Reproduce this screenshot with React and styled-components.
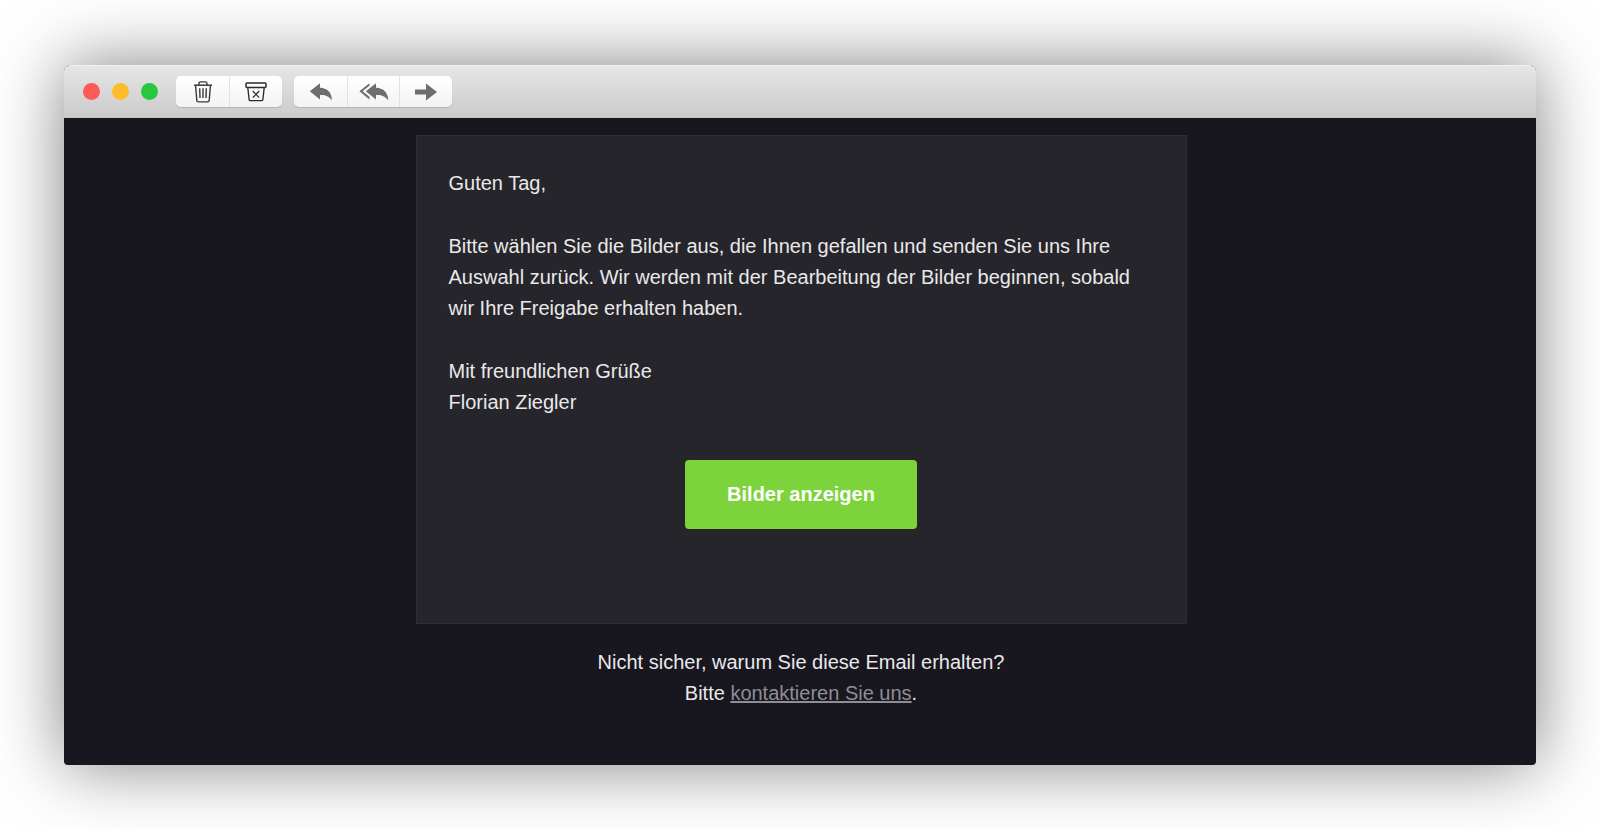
import React from "react";
import styled, { createGlobalStyle } from "styled-components";

const GlobalStyle = createGlobalStyle`
  * {
    box-sizing: border-box;
  }

  body {
    margin: 0;
    background-color: #ffffff;
    font-family: "Liberation Sans", Arial, sans-serif;
  }
`;

const Page = styled.div`
  padding: 65px 64px;
  overflow: hidden;
`;

const Window = styled.div`
  border-radius: 6px 6px 4px 4px;
  background-color: #18161f;
  box-shadow: 0 0 70px rgba(0, 0, 0, 0.5);
`;

const Toolbar = styled.header`
  display: flex;
  align-items: center;
  height: 53px;
  padding: 0 19px;
  border-top: 1px solid #f0f0f0;
  border-bottom: 1px solid #c4c4c4;
  border-radius: 6px 6px 0 0;
  background: linear-gradient(#e6e6e6, #cbcbcb);
`;

const WindowControls = styled.div`
  display: flex;
  gap: 12px;
  margin-right: 18px;
`;

const Dot = styled.button`
  width: 17px;
  height: 17px;
  padding: 0;
  border: none;
  border-radius: 50%;
  background-color: ${(props) => props.$color};
`;

const ButtonGroup = styled.div`
  display: flex;
  margin-right: 12px;
  padding: 0 1px;
  border-radius: 5px;
  background: linear-gradient(#ffffff, #f3f3f3);
  box-shadow: 0 1px 1px rgba(0, 0, 0, 0.14);
`;

const ToolButton = styled.button`
  display: flex;
  justify-content: center;
  align-items: center;
  width: 52px;
  height: 31px;
  padding: 0;
  border: none;
  background: none;

  & + & {
    border-left: 1px solid #e2e2e2;
  }
`;

const Mail = styled.main`
  display: flex;
  flex-direction: column;
  align-items: center;
  padding: 17px 16px 56px 18px;
  color: #e9e9ea;
  font-size: 20px;
  line-height: 31px;
`;

const Card = styled.section`
  width: 100%;
  max-width: 771px;
  padding: 32px 32px 94px;
  border: 1px solid #303034;
  background-color: #26252b;
`;

const Paragraph = styled.p`
  margin: 0 0 32px;
`;

const Action = styled.div`
  display: flex;
  justify-content: center;
  padding-top: 10px;
`;

const ShowButton = styled.button`
  width: 232px;
  height: 69px;
  border: none;
  border-radius: 4px;
  background-color: #7dd33b;
  color: #ffffff;
  font-family: inherit;
  font-size: 20px;
  font-weight: 700;
`;

const Footer = styled.footer`
  padding-top: 23px;
  text-align: center;
`;

const ContactLink = styled.a`
  color: #8f8e94;
  text-decoration: underline;
`;

const TrashIcon = () => (
  <svg width="20" height="22" viewBox="0 0 20 22" fill="none" stroke="#3a3a3a">
    <path d="M1 4.2h18" strokeWidth="1.5" />
    <path d="M6 4V2.4Q6 .9 7.6 .9h4.8Q14 .9 14 2.4V4" strokeWidth="1.4" />
    <path
      d="M2.6 4.8l1.2 14.6q.1 1.5 1.6 1.5h9.2q1.5 0 1.6-1.5l1.2-14.6"
      strokeWidth="1.4"
    />
    <path d="M6.7 7.2l.3 9.8M10 7.2V17M13.3 7.2L13 17" strokeWidth="1.4" />
  </svg>
);

const ArchiveIcon = () => (
  <svg width="22" height="20" viewBox="0 0 22 20" fill="none" stroke="#2a2a2a">
    <rect x="1" y="1" width="20" height="4.4" rx="1" strokeWidth="1.5" />
    <path
      d="M2.8 5.6l1.3 12q.1 1 1.2 1h11.4q1.1 0 1.2-1l1.3-12"
      strokeWidth="1.3"
    />
    <path d="M7.8 9l6.4 6.6M14.2 9l-6.4 6.6" strokeWidth="1.2" />
  </svg>
);

const ReplyIcon = () => (
  <svg width="24" height="18" viewBox="0 0 24 18" fill="#6e6e6e">
    <path d="M.8 8.3L11 .2v4.6c6.8.2 11.8 4.2 12 12.8-2.4-4-6-5.8-12-5.6v4.4z" />
  </svg>
);

const ReplyAllIcon = () => (
  <svg width="30" height="18" viewBox="0 0 30 18" fill="#6e6e6e">
    <path d="M10.4 .2v2.6L3.6 8.3l6.8 5.4v2.7L.4 8.3z" />
    <path d="M6.8 8.3L17 .2v4.6c7 .2 12 4.2 12.3 12.8-2.4-4-6.3-5.8-12.3-5.6v4.4z" />
  </svg>
);

const ForwardIcon = () => (
  <svg width="22" height="18" viewBox="0 0 22 18" fill="#6e6e6e">
    <path d="M0 6.5h11V.4L22 9l-11 8.6v-6.1H0z" />
  </svg>
);

const App = () => {
  return (
    <>
      <GlobalStyle />
      <Page>
        <Window>
          <Toolbar>
            <WindowControls>
              <Dot $color="#fc5b57" aria-label="Schließen" />
              <Dot $color="#fdbc2e" aria-label="Minimieren" />
              <Dot $color="#27c840" aria-label="Maximieren" />
            </WindowControls>
            <ButtonGroup>
              <ToolButton aria-label="Löschen">
                <TrashIcon />
              </ToolButton>
              <ToolButton aria-label="Archivieren">
                <ArchiveIcon />
              </ToolButton>
            </ButtonGroup>
            <ButtonGroup>
              <ToolButton aria-label="Antworten">
                <ReplyIcon />
              </ToolButton>
              <ToolButton aria-label="Allen antworten">
                <ReplyAllIcon />
              </ToolButton>
              <ToolButton aria-label="Weiterleiten">
                <ForwardIcon />
              </ToolButton>
            </ButtonGroup>
          </Toolbar>
          <Mail>
            <Card>
              <Paragraph>Guten Tag,</Paragraph>
              <Paragraph>
                Bitte wählen Sie die Bilder aus, die Ihnen gefallen und senden
                Sie uns Ihre Auswahl zurück. Wir werden mit der Bearbeitung der
                Bilder beginnen, sobald wir Ihre Freigabe erhalten haben.
              </Paragraph>
              <Paragraph>
                Mit freundlichen Grüße
                <br />
                Florian Ziegler
              </Paragraph>
              <Action>
                <ShowButton>Bilder anzeigen</ShowButton>
              </Action>
            </Card>
            <Footer>
              Nicht sicher, warum Sie diese Email erhalten?
              <br />
              Bitte <ContactLink href="#kontakt">kontaktieren Sie uns</ContactLink>.
            </Footer>
          </Mail>
        </Window>
      </Page>
    </>
  );
};

export default App;
